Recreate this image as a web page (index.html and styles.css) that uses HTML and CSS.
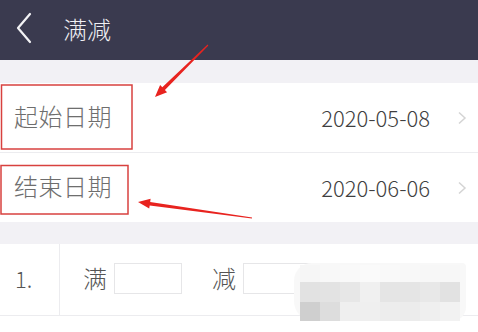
FILE: index.html
```html
<!DOCTYPE html>
<html lang="zh-CN">
<head>
    <meta charset="UTF-8">
    <meta name="viewport" content="width=device-width, initial-scale=1.0">
    <title>满减</title>
    <link rel="stylesheet" href="styles.css">
</head>
<body>
    <div id="page">
        <div class="top-bar">
            <svg class="back-icon" width="20" height="34" viewBox="0 0 20 34">
                <polyline points="15,2 3,16 15,30" fill="none" stroke="#f2f2f5" stroke-width="2.2" stroke-linecap="round" stroke-linejoin="round"/>
            </svg>
            <div class="title">满减</div>
        </div>

        <div class="group">
            <div class="row">
                <div class="label">起始日期</div>
                <div class="value">2020-05-08</div>
                <svg class="arrow" width="10" height="14" viewBox="0 0 10 14">
                    <polyline points="2,1.5 8,7 2,12.5" fill="none" stroke="#d4d4d4" stroke-width="1.5"/>
                </svg>
            </div>
            <div class="row">
                <div class="label">结束日期</div>
                <div class="value">2020-06-06</div>
                <svg class="arrow" width="10" height="14" viewBox="0 0 10 14">
                    <polyline points="2,1.5 8,7 2,12.5" fill="none" stroke="#d4d4d4" stroke-width="1.5"/>
                </svg>
            </div>
        </div>

        <div class="group rule-group">
            <div class="rule-row">
                <div class="rule-num">1.</div>
                <div class="rule-body">
                    <span class="rule-word">满</span>
                    <div class="rule-input"></div>
                    <span class="rule-word second">减</span>
                    <div class="rule-input"></div>
                </div>
            </div>
        </div>

        <!-- mosaic over the rest of the rule -->
        <div class="mosaic">
            <div class="cell" style="background:#f6f6f6"></div>
            <div class="cell" style="background:#f8f8f8"></div>
            <div class="cell" style="background:#f9f9f9"></div>
            <div class="cell" style="background:#fafafa"></div>
            <div class="cell" style="background:#f9f9f9"></div>
            <div class="cell" style="background:#f8f8f8"></div>
            <div class="cell" style="background:#f7f7f7"></div>
            <div class="cell" style="background:#f7f7f7"></div>
            <div class="cell" style="background:#e2e2e2"></div>
            <div class="cell" style="background:#e3e3e3"></div>
            <div class="cell" style="background:#e7e7e7"></div>
            <div class="cell" style="background:#f0f0f0"></div>
            <div class="cell" style="background:#e5e5e5"></div>
            <div class="cell" style="background:#e5e5e5"></div>
            <div class="cell" style="background:#e8e8e8"></div>
            <div class="cell" style="background:#e2e2e2"></div>
            <div class="cell" style="background:#cfcfcf"></div>
            <div class="cell" style="background:#dddddd"></div>
            <div class="cell" style="background:#efefef"></div>
            <div class="cell" style="background:#efefef"></div>
            <div class="cell" style="background:#ededed"></div>
            <div class="cell" style="background:#ececec"></div>
            <div class="cell" style="background:#efefef"></div>
            <div class="cell" style="background:#f2f2f2"></div>
        </div>

        <!-- red annotations -->
        <svg class="marks" width="478" height="332" viewBox="0 0 478 332">
            <rect x="1.5" y="85" width="130.5" height="64" fill="none" stroke="#d8413f" stroke-width="1.5"/>
            <rect x="1" y="165.5" width="127" height="48.5" fill="none" stroke="#d8413f" stroke-width="1.5"/>
            <polygon points="207.6,44.6 162.3,87.3 160.1,85.0 155,97 167.1,92.2 164.9,89.9 208.4,45.4" fill="#e8231f"/>
            <polygon points="252.1,217.5 150.2,201.9 150.6,198.7 138,202 149.2,208.6 149.7,205.5 251.9,218.5" fill="#e8231f"/>
        </svg>
    </div>
</body>
</html>
```

FILE: styles.css
```css
body {
    margin: 0;
    background-color: #fff;
    font-family: "Noto Sans CJK SC", "Noto Sans", sans-serif;
    font-weight: 300;
}
#page {
    position: relative;
    width: 478px;
    height: 332px;
    overflow: hidden;
    background-color: #f2f1f5;
}
.top-bar {
    height: 60px;
    background-color: #3a3a4f;
    display: flex;
    align-items: center;
    padding-left: 15px;
    box-sizing: border-box;
}
.back-icon {
    display: block;
    margin-top: -2px;
}
.title {
    margin-left: 28px;
    color: #f0f0f4;
    font-size: 24px;
    line-height: 1;
    margin-top: -3px;
}
.group {
    margin-top: 23px;
    background-color: #fff;
}
.row {
    height: 69px;
    display: flex;
    align-items: center;
    padding-left: 14px;
    padding-right: 10px;
    border-bottom: 1px solid #ececef;
}
.row:last-child {
    border-bottom: none;
}
.label {
    flex: 1;
    font-size: 24px;
    color: #6e6e6e;
    letter-spacing: 0.5px;
    margin-top: -4px;
}
.value {
    font-size: 22px;
    color: #3f3f3f;
    margin-top: -2px;
}
.arrow {
    display: block;
    margin-left: 27px;
    margin-right: 1px;
}
.rule-group {
    margin-top: 22px;
    height: 100px;
}
.rule-row {
    height: 71px;
    display: flex;
    border-bottom: 1px solid #ececef;
}
.rule-num {
    width: 60px;
    box-sizing: border-box;
    padding-left: 15px;
    border-right: 1px solid #ececef;
    display: flex;
    align-items: center;
    font-size: 22px;
    color: #555;
    padding-bottom: 4px;
}
.rule-body {
    flex: 1;
    display: flex;
    align-items: center;
    padding-left: 23px;
    padding-bottom: 4px;
}
.rule-word {
    font-size: 24px;
    color: #555;
    margin-right: 7px;
}
.rule-word.second {
    margin-left: 30px;
}
.rule-input {
    width: 66px;
    height: 29px;
    border: 1px solid #e6e6e8;
    margin-top: 2px;
}
.mosaic {
    position: absolute;
    left: 294px;
    top: 263px;
    width: 172px;
    height: 58px;
    padding: 2px 6px 0 6px;
    box-sizing: border-box;
    background-color: #f8f8f8;
    border-radius: 18px 4px 14px 20px;
    display: grid;
    grid-template-columns: repeat(8, 20px);
    grid-template-rows: 17px 20px 19px;
}
.marks {
    position: absolute;
    left: 0;
    top: 0;
}
```
